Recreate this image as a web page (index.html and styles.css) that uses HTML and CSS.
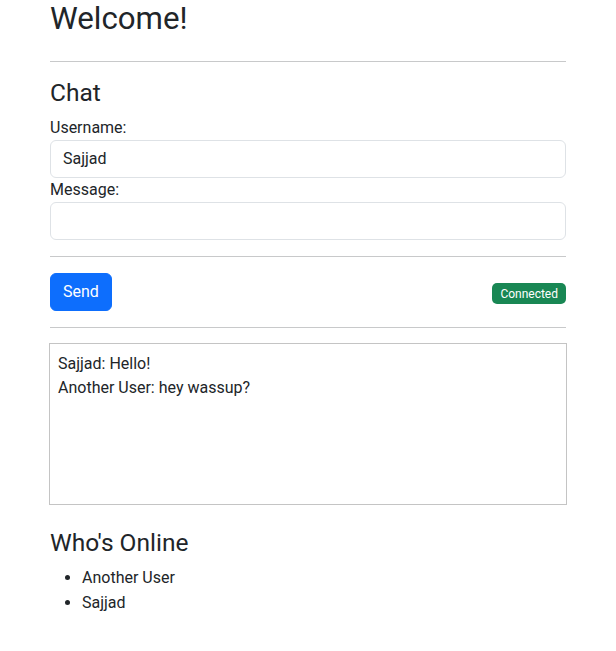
FILE: index.html
```html
<!DOCTYPE html>
<html lang="en">
<head>
<meta charset="utf-8">
<title>Chat</title>
<link rel="stylesheet" href="styles.css">
</head>
<body>
<div class="container">
  <h1 class="title">Welcome!</h1>
  <hr class="rule">
  <h3 class="heading">Chat</h3>
  <label class="label" for="username">Username:</label>
  <input class="field" id="username" type="text" value="Sajjad">
  <label class="label" for="message">Message:</label>
  <input class="field" id="message" type="text">
  <hr class="rule">
  <div class="actions">
    <button class="btn-send" type="button">Send</button>
    <span class="badge">Connected</span>
  </div>
  <hr class="rule">
  <div class="messages">
    <div class="msg">Sajjad: Hello!</div>
    <div class="msg">Another User: hey wassup?</div>
  </div>
  <h3 class="heading online-heading">Who's Online</h3>
  <ul class="users">
    <li>Another User</li>
    <li>Sajjad</li>
  </ul>
</div>
</body>
</html>
```
FILE: styles.css
```css
* { box-sizing: border-box; }
html, body { margin: 0; padding: 0; }
body {
  font-family: Roboto, "Liberation Sans", sans-serif;
  font-size: 16px;
  line-height: 1.5;
  color: #212529;
  background: #fff;
}
.container {
  width: 540px;
  margin: 0 auto;
  padding: 0 12px;
}
.title {
  margin: 0 0 24px;
  font-size: 31.24px;
  font-weight: 400;
  line-height: 1.2;
}
.heading {
  margin: 0 0 8px;
  font-size: 24.5px;
  font-weight: 400;
  line-height: 1.2;
}
.rule {
  margin: 16px 0;
  border: 0;
  border-top: 1px solid #c8c9ca;
  height: 0;
}
.label {
  display: block;
  line-height: 24px;
}
.field {
  display: block;
  width: 100%;
  height: 38px;
  padding: 6px 12px;
  font: inherit;
  line-height: 24px;
  color: #212529;
  background: #fff;
  border: 1px solid #dee2e6;
  border-radius: 6px;
}
.actions {
  display: flex;
  justify-content: space-between;
  align-items: baseline;
}
.btn-send {
  height: 38px;
  padding: 6px 12px;
  font: inherit;
  line-height: 24px;
  color: #fff;
  background: #0d6efd;
  border: 1px solid #0d6efd;
  border-radius: 6px;
}
.badge {
  display: inline-block;
  padding: 4.5px 8px;
  font-size: 12px;
  font-weight: 400;
  line-height: 1;
  color: #fff;
  background: #198754;
  border-radius: 5px;
  position: relative;
  top: 1px;
}
.messages {
  margin: -1px -1px 0;
  height: 162px;
  padding: 8px 8px;
  border: 1px solid #c4c4c4;
}
.msg { line-height: 24px; }
.online-heading { margin-top: 23px; }
.users {
  margin: 2px 0 16px;
  padding-left: 32px;
}
.users li { line-height: 25px; }
```
